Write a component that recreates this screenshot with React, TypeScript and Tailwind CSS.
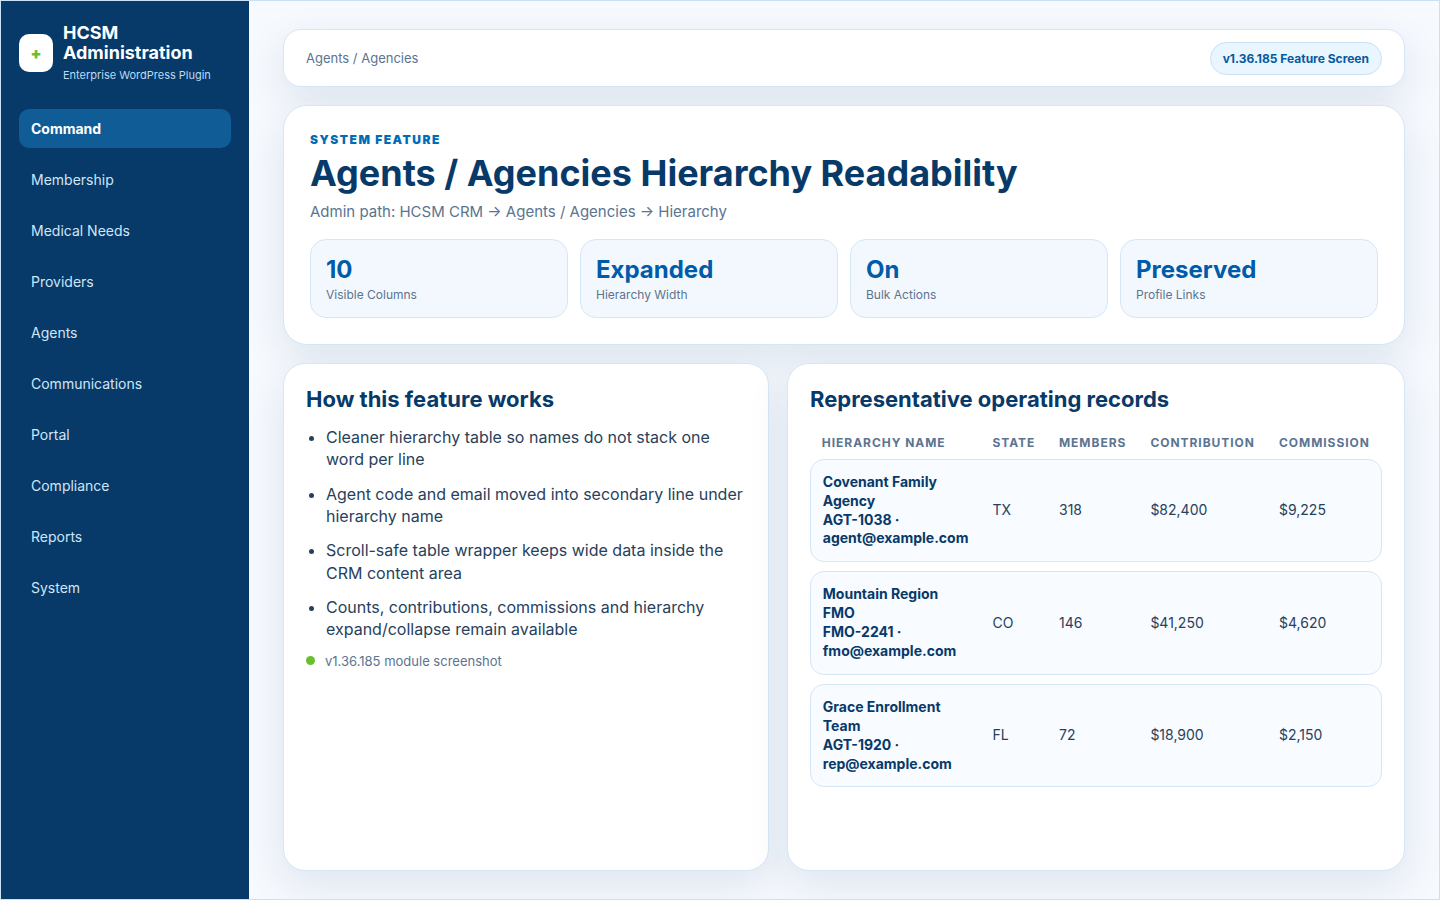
import clsx from "clsx";

const NAV = [
  "Command",
  "Membership",
  "Medical Needs",
  "Providers",
  "Agents",
  "Communications",
  "Portal",
  "Compliance",
  "Reports",
  "System",
];

const STATS = [
  { value: "10", label: "Visible Columns" },
  { value: "Expanded", label: "Hierarchy Width" },
  { value: "On", label: "Bulk Actions" },
  { value: "Preserved", label: "Profile Links" },
];

const POINTS = [
  "Cleaner hierarchy table so names do not stack one word per line",
  "Agent code and email moved into secondary line under hierarchy name",
  "Scroll-safe table wrapper keeps wide data inside the CRM content area",
  "Counts, contributions, commissions and hierarchy expand/collapse remain available",
];

const COLUMNS = ["Hierarchy Name", "State", "Members", "Contribution", "Commission"];

const RECORDS = [
  { name: "Covenant Family Agency", sub: "AGT-1038 · agent@example.com", cells: ["TX", "318", "$82,400", "$9,225"] },
  { name: "Mountain Region FMO", sub: "FMO-2241 · fmo@example.com", cells: ["CO", "146", "$41,250", "$4,620"] },
  { name: "Grace Enrollment Team", sub: "AGT-1920 · rep@example.com", cells: ["FL", "72", "$18,900", "$2,150"] },
];

const CARD = "border border-[#d5e7f5] bg-white shadow-[0_14px_40px_rgba(7,57,96,0.1)]";

function Sidebar() {
  return (
    <aside className="w-[248px] shrink-0 bg-[#073969] px-[18px] pt-[22px] text-white">
      <div className="mb-[26px] flex items-center gap-2.5">
        <div className="flex h-[38px] w-[34px] shrink-0 items-center justify-center rounded-[10px] bg-white text-base font-black text-[#6abf2f]">
          +
        </div>
        <div>
          <div className="text-lg leading-5 font-bold">HCSM Administration</div>
          <div className="mt-1 text-[11px] leading-4 tracking-[-0.01px] text-[#b9dbf3]">Enterprise WordPress Plugin</div>
        </div>
      </div>
      <nav className="flex flex-col gap-3">
        {NAV.map((item, i) => (
          <div
            key={item}
            className={clsx(
              "h-[39px] rounded-[10px] px-3 text-sm leading-[39px]",
              i === 0 ? "bg-[#105c96] font-bold text-white" : "text-[#d0e6f7]",
            )}
          >
            {item}
          </div>
        ))}
      </nav>
    </aside>
  );
}

function Hero() {
  return (
    <section className={clsx(CARD, "h-[240px] rounded-[24px] px-[26px] pt-[26px]")}>
      <div className="text-xs leading-[15px] font-black tracking-[1.5px] text-[#006bb6] uppercase">System Feature</div>
      <h1 className="mt-[6px] text-4xl leading-[40px] font-bold text-[#073969]">
        Agents / Agencies Hierarchy Readability
      </h1>
      <p className="mt-[10px] text-[15px] leading-[18px] text-[#5b7490]">
        Admin path: HCSM CRM → Agents / Agencies → Hierarchy
      </p>
      <div className="mt-[18px] grid grid-cols-4 gap-3">
        {STATS.map((s) => (
          <div key={s.label} className="h-[79px] rounded-2xl border border-[#d5e7f5] bg-[#f3f8fe] px-[15px] pt-[15px]">
            <div className="text-2xl leading-[30px] font-bold text-[#005ba8]">{s.value}</div>
            <div className="mt-[2px] text-xs leading-[15px] text-[#5b7490]">{s.label}</div>
          </div>
        ))}
      </div>
    </section>
  );
}

function FeatureNotes() {
  return (
    <section className={clsx(CARD, "w-[486px] shrink-0 rounded-[22px] px-[22px] pt-[22px]")}>
      <h2 className="text-[22px] leading-[27px] font-bold text-[#073969]">How this feature works</h2>
      <ul className="mt-[12.8px] list-disc space-y-3 pl-5 text-base leading-[22.38px] text-[#27415c]">
        {POINTS.map((p) => (
          <li key={p}>{p}</li>
        ))}
      </ul>
      <div className="mt-3 flex items-center gap-2.5 text-[13px] leading-4 text-[#5b7490]">
        <span className="size-[9px] rounded-full bg-[#6abf2f]" />
        v1.36.185 module screenshot
      </div>
    </section>
  );
}

function Records() {
  return (
    <section className={clsx(CARD, "min-w-0 flex-1 rounded-[22px] px-[22px] pt-[22px]")}>
      <h2 className="text-[22px] leading-[27px] font-bold text-[#073969]">Representative operating records</h2>
      <div className="mt-[22px] grid h-[15px] grid-cols-[170.7px_66.5px_91.4px_128.6px_1fr] pl-[11.8px] text-xs leading-[15px] font-bold tracking-[0.96px] text-[#5b7490] uppercase">
        {COLUMNS.map((c) => (
          <div key={c}>{c}</div>
        ))}
      </div>
      <div className="mt-[8.75px] flex flex-col gap-[9.4px]">
        {RECORDS.map((r) => (
          <div
            key={r.name}
            className="grid h-[103.2px] grid-cols-[169.7px_66.5px_91.4px_128.6px_1fr] items-center rounded-[14px] border border-[#d5e7f5] bg-[#f8fbff] pl-[11.8px] text-sm text-[#27415c]"
          >
            <div className="w-[146px] pt-[0.4px] leading-[18.85px] font-bold text-[#073969]">
              {r.name}
              <br />
              {r.sub}
            </div>
            {r.cells.map((c) => (
              <div key={c} className="leading-[18.8px]">
                {c}
              </div>
            ))}
          </div>
        ))}
      </div>
    </section>
  );
}

export default function App() {
  return (
    <div className="flex h-[900px] w-[1440px] overflow-hidden border border-[#c9e1f3] bg-[#f6f9fe] font-[Inter,sans-serif]">
      <Sidebar />
      <main className="flex min-w-0 flex-1 flex-col gap-[18px] px-[34px] py-7">
        <header className={clsx(CARD, "flex h-[58px] shrink-0 items-center justify-between rounded-[18px] px-[22px]")}>
          <div className="pt-px text-[13px] leading-[17px] text-[#5b7490]">Agents / Agencies</div>
          <div className="flex h-[33px] items-center rounded-full border border-[#c9e1f3] bg-[#e9f5ff] px-3 pt-px text-xs font-bold text-[#075a9c]">
            v1.36.185 Feature Screen
          </div>
        </header>
        <Hero />
        <div className="flex min-h-0 flex-1 gap-[18px]">
          <FeatureNotes />
          <Records />
        </div>
      </main>
    </div>
  );
}
